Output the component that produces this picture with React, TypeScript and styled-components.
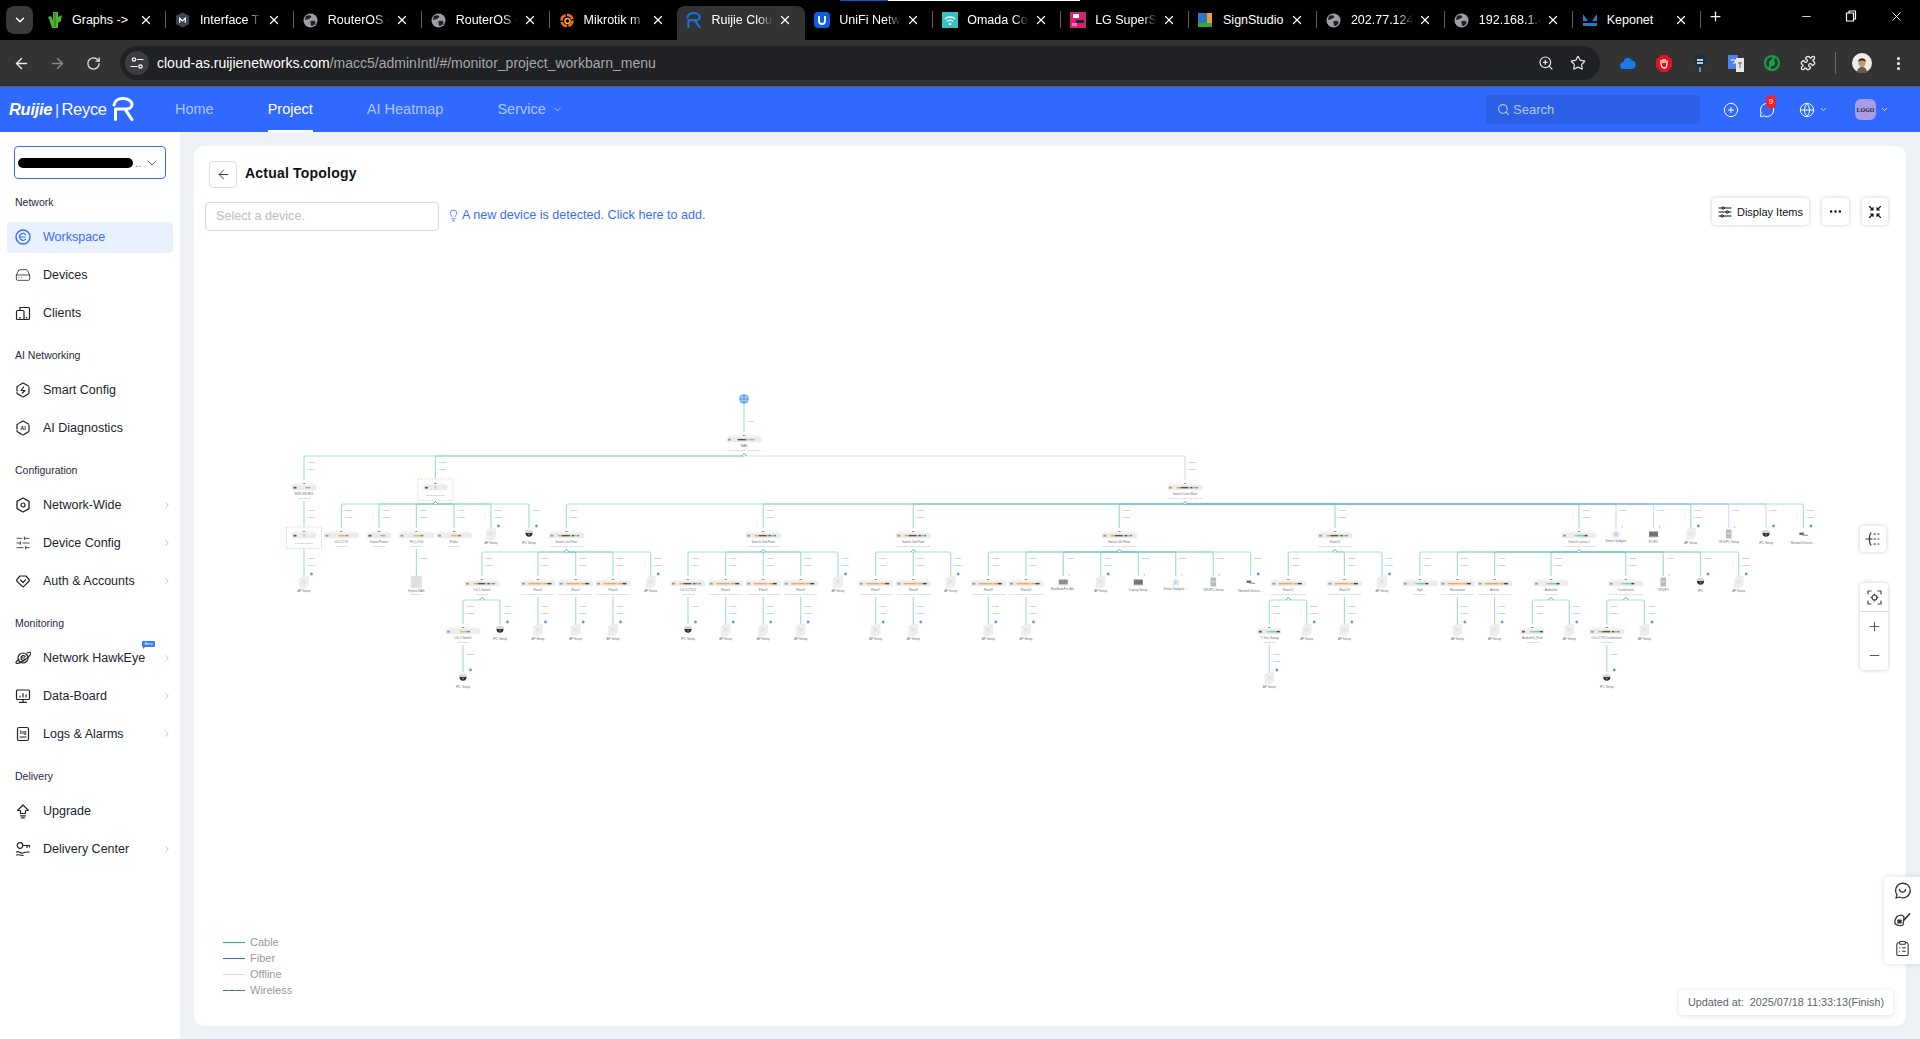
import React from 'react';
import styled, { createGlobalStyle } from 'styled-components';
import {
  ArrowLeft, ArrowRight, RotateCw, Star, Search, ZoomIn, Plus, Minus, ChevronDown, ChevronRight, X,
  Lightbulb, MessageCircle, Globe, CirclePlus, SlidersHorizontal, Ellipsis, EllipsisVertical, ClipboardList,
  Puzzle, HardDrive,
} from 'lucide-react';

const GlobalStyle = createGlobalStyle`
  html, body { margin: 0; padding: 0; height: 1039px; overflow: hidden; background: #eef1f5; }
  body { font-family: "Liberation Sans", Arial, sans-serif; }
  * { box-sizing: border-box; }
`;

const Page = styled.div`
  width: 1920px; height: 1039px; display: flex; flex-direction: column; position: relative; overflow: hidden;
`;

/* ---------- browser chrome ---------- */
const TabStrip = styled.div`
  height: 40px; background: #000; display: flex; align-items: flex-start; padding-left: 6px; position: relative;
`;
const TabListButton = styled.div`
  width: 27px; height: 28px; margin-top: 6px; margin-right: 5px; border-radius: 8px; background: #3a3a3a; color: #fff;
  display: flex; align-items: center; justify-content: center;
`;
const LoadBar = styled.div<{ $left: number; $width: number; $color: string }>`
  position: absolute; top: 0; height: 1px; left: ${p => p.$left}px; width: ${p => p.$width}px; background: ${p => p.$color};
`;
const Tab = styled.div<{ $active?: boolean; $sep?: boolean }>`
  width: 127.9px; height: 34px; margin-top: 6px; display: flex; align-items: center; padding: 0 0 6px 9px; position: relative;
  color: #fff; font-size: 12.5px; flex: none;
  background: ${p => (p.$active ? '#333' : 'transparent')};
  border-radius: 8px 8px 0 0;
  &::after {
    content: ''; position: absolute; right: 0; top: 5px; width: 1px; height: 17px;
    background: ${p => (p.$sep ? '#5f5f5f' : 'transparent')};
  }
`;
const FavBox = styled.div`
  width: 16px; height: 18px; flex: none; display: flex; align-items: center;
`;
const TabTitle = styled.div<{ $fade: boolean }>`
  width: 62px; margin-left: 9px; white-space: nowrap;
  ${p => (p.$fade ? 'mask-image: linear-gradient(90deg,#000 76%,transparent 100%);' : '')}
`;
const TabClose = styled.div`
  position: absolute; left: 101px; top: 7px; width: 14px; height: 14px; color: #fff; display: flex;
`;
const NewTab = styled.div`
  margin-top: 9px; margin-left: 7px; color: #fff; display: flex;
`;
const WindowControls = styled.div`
  margin-left: auto; display: flex; align-items: center; height: 32px; color: #fff; padding-right: 16px; gap: 32px;
`;
const Toolbar = styled.div`
  height: 47px; background: #333; border-bottom: 1px solid #5c5c5c; display: flex; align-items: center; padding-left: 3px; color: #fff;
`;
const NavButton = styled.div<{ $dim?: boolean }>`
  width: 36px; height: 32px; display: flex; align-items: center; justify-content: center;
  color: ${p => (p.$dim ? '#8a8a8a' : '#e8e8e8')};
`;
const Omnibox = styled.div`
  width: 1480px; height: 34px; margin-left: 9px; border-radius: 17px; background: #202124; display: flex; align-items: center; padding: 0 14px 0 5px;
`;
const SiteButton = styled.div`
  width: 24px; height: 24px; border-radius: 50%; background: #3c3d40; display: flex; align-items: center; justify-content: center; color: #fff;
`;
const Url = styled.div`
  margin-left: 8px; font-size: 14px; color: #a8a8a8; white-space: nowrap;
  b { font-weight: 400; color: #fff; }
`;
const OmniIcons = styled.div`
  margin-left: auto; display: flex; gap: 16px; color: #e3e3e3;
`;
const ExtRow = styled.div`
  display: flex; align-items: center; margin-left: 10px;
`;
const Ext = styled.div`
  width: 36px; height: 32px; display: flex; align-items: center; justify-content: center;
`;
const ToolbarSep = styled.div`
  width: 1px; height: 22px; background: #6a6a6a; margin: 0 8px 0 9px;
`;

/* ---------- app header ---------- */
const AppHeader = styled.header`
  height: 45px; background: #2f69ff; display: flex; align-items: center; padding-left: 9px; color: #fff; flex: none;
`;
const Logo = styled.div`
  width: 125px; display: flex; align-items: center; justify-content: space-between; color: #fff; white-space: nowrap;
`;
const LogoWord = styled.span`
  font-size: 16.5px; letter-spacing: -0.3px;
  b { font-style: italic; font-weight: 700; }
  i { font-style: normal; margin: 0 3px 0 3px; font-weight: 300; font-size: 14px; }
`;
const TopNav = styled.nav`
  margin-left: 41px; display: flex; gap: 54px; height: 100%;
`;
const TopNavItem = styled.div<{ $active?: boolean }>`
  height: 100%; display: flex; align-items: center; gap: 6px; font-size: 14.5px; padding-top: 1px;
  color: ${p => (p.$active ? '#fff' : 'rgba(255,255,255,.62)')};
  border-bottom: 2px solid ${p => (p.$active ? '#fff' : 'transparent')};
`;
const HeaderRight = styled.div`
  margin-left: auto; display: flex; align-items: center; padding-right: 31px;
`;
const HeaderSearch = styled.div`
  width: 214px; height: 29px; background: #2a5fe6; border-radius: 4px; display: flex; align-items: center; padding-left: 11px; gap: 3px;
  color: rgba(255,255,255,.65); font-size: 13px;
`;
const HeaderIcon = styled.div<{ $ml: number }>`
  margin-left: ${p => p.$ml}px; position: relative; display: flex; align-items: center; color: #fff; gap: 4px;
`;
const Badge = styled.span`
  position: absolute; top: -7px; left: 7px; width: 10px; height: 14px; border-radius: 6px; background: #f5222d;
  color: #fff; font-size: 8px; line-height: 14px; text-align: center;
`;
const TenantLogo = styled.div`
  width: 21px; height: 21px; border-radius: 6px; background: #a99be6; color: #1c1c1c; font-size: 6px; font-family: "Liberation Serif", serif;
  font-weight: 700; display: flex; align-items: center; justify-content: center;
`;

/* ---------- layout ---------- */
const Body = styled.div`
  flex: 1; display: flex; min-height: 0;
`;
const Sidebar = styled.aside`
  width: 180px; background: #fff; flex: none; padding-top: 14px;
`;
const ProjectSelect = styled.div`
  margin: 0 14px 13px; height: 33px; border: 1px solid #3a6dff; border-radius: 4px; display: flex; align-items: center; padding-left: 3px; color: #555; font-size: 12px;
`;
const Redaction = styled.div`
  width: 115px; height: 10px; border-radius: 5px; background: #000; flex: none;
`;
const Dots = styled.span`
  margin-left: 2px; color: #888; flex: 1;
`;
const SelectChevron = styled.div`
  display: flex; margin-right: 5px; color: #444;
`;
const GroupLabel = styled.div`
  height: 20px; line-height: 20px; margin: 0 0 9.5px 15px; font-size: 10.5px; color: #1f2a3d;
`;
const Group = styled.div`
  margin-bottom: 16.5px;
`;
const NavRow = styled.div<{ $active?: boolean }>`
  height: 31px; margin: 0 7px 7px; border-radius: 4px; display: flex; align-items: center; padding-left: 8px; position: relative;
  font-size: 12.5px; color: ${p => (p.$active ? '#3a6dff' : '#20242c')};
  background: ${p => (p.$active ? '#e9f0ff' : 'transparent')};
`;
const NavIconBox = styled.div`
  width: 16px; height: 16px; display: flex; margin-right: 12px; flex: none;
`;
const NavChevron = styled.div`
  position: absolute; right: 1px; top: 10px; color: #b5b5b5; display: flex;
`;
const BetaTag = styled.span`
  position: absolute; left: 135px; top: -2px; width: 13px; height: 6px; border-radius: 1px; background: #3a7bff; color: #fff;
  font-size: 4px; line-height: 6px; text-align: center;
  &::after { content: ''; position: absolute; left: 1px; top: 6px; border: 1px solid transparent; border-top-color: #3a7bff; border-left-color: #3a7bff; }
`;
const Main = styled.main`
  flex: 1; padding: 14px 14px 13px; min-width: 0; display: flex;
`;
const Card = styled.section`
  flex: 1; background: #fff; border-radius: 10px; position: relative; padding: 15px 18px 0 15px; overflow: hidden;
`;
const TitleRow = styled.div`
  display: flex; align-items: center; gap: 8px; position: relative; z-index: 1;
`;
const BackButton = styled.div`
  width: 28px; height: 27px; border: 1px solid #dcdfe6; border-radius: 4px; display: flex; align-items: center; justify-content: center; color: #333;
`;
const Title = styled.h1`
  margin: -3px 0 0; font-size: 14px; font-weight: 700; color: #111; letter-spacing: 0.2px;
`;
const SearchRow = styled.div`
  margin: 14px 0 0 -4px; display: flex; align-items: flex-start; position: relative; z-index: 1;
`;
const DeviceInput = styled.div`
  width: 234px; height: 29px; border: 1px solid #d5d9e2; border-radius: 4px; padding-left: 10px; font-size: 12.6px; line-height: 27px; color: #bdbdbd;
`;
const Hint = styled.div`
  margin: 6px 0 0 8px; display: flex; align-items: center; gap: 2px; font-size: 12.6px; color: #3a6dff;
`;
const Tools = styled.div`
  margin: -4px 0 0 auto; display: flex; gap: 13px;
`;
const ToolButton = styled.div<{ $w?: number }>`
  height: 27px; ${p => (p.$w ? `width: ${p.$w}px;` : 'padding: 0 6px;')} background: #fff; border-radius: 4px; display: flex; align-items: center; justify-content: center; gap: 5px;
  font-size: 11px; color: #111; box-shadow: 0 0 4px rgba(0,0,0,.22);
`;
const TopoSvg = styled.svg`
  position: absolute; left: 0; top: 0; width: 1712px; height: 880px;
`;
const CollapseButton = styled.div`
  position: absolute; right: 20px; top: 380px; width: 26px; height: 26px; background: #fff; border-radius: 4px; box-shadow: 0 0 4px rgba(0,0,0,.22);
  display: flex; align-items: center; justify-content: center; color: #333;
`;
const ZoomGroup = styled.div`
  position: absolute; right: 18px; top: 437px; width: 28px; height: 87px; background: #fff; border-radius: 4px; box-shadow: 0 0 4px rgba(0,0,0,.22);
  display: flex; flex-direction: column; color: #444;
`;
const ZoomCell = styled.div<{ $line?: boolean; $h: number }>`
  height: ${p => p.$h}px; display: flex; align-items: center; justify-content: center;
  ${p => (p.$line ? 'border-bottom: 1px solid #dcdfe6;' : '')}
`;
const Legend = styled.div`
  position: absolute; left: 29px; bottom: 28px; display: flex; flex-direction: column;
`;
const LegendRow = styled.div`
  height: 16px; display: flex; align-items: center; gap: 5px; font-size: 11px; color: #9a9a9a;
`;
const LegendLine = styled.span<{ $color: string; $dash?: boolean }>`
  width: 22px; height: 1px; background: ${p => p.$color};
  ${p => (p.$dash ? 'background: repeating-linear-gradient(90deg,#555 0 4px,#1db58c 4px 7px);' : '')}
`;
const Stamp = styled.div`
  position: absolute; right: 13px; bottom: 11px; height: 25px; padding: 0 9px; background: #fff; border-radius: 4px; box-shadow: 0 1px 6px rgba(0,0,0,.12);
  font-size: 10.8px; color: #5b6270; line-height: 25px; white-space: pre;
`;
const FloatPanel = styled.div`
  position: absolute; right: 0; top: 877px; width: 36px; height: 87px; background: #fff; border-radius: 4px 0 0 4px; box-shadow: 0 0 6px rgba(0,0,0,.14);
  display: flex; flex-direction: column; align-items: center; gap: 12px; padding: 4.5px 0 0; color: #333;
`;

/* ---------- small drawings ---------- */
const Stroke = styled.svg`
  fill: none; stroke: currentColor; stroke-width: 1.2; stroke-linecap: round; stroke-linejoin: round; display: block;
`;
const S: React.FC<{ children: React.ReactNode; size?: number; vb?: string }> = ({ children, size = 16, vb = '0 0 16 16' }) => (
  <Stroke width={size} height={size} viewBox={vb}>{children}</Stroke>
);
const RuijieMark = ({ color = '#fff', size = 22, sw = 3 }: { color?: string; size?: number; sw?: number }) => (
  <svg width={size} height={size * 1.1} viewBox="0 0 22 24" fill="none" stroke={color} strokeWidth={sw} strokeLinecap="round" strokeLinejoin="round">
    <path d="M2 8C3 3 7 1.5 11 1.5 16 1.5 20 4 20 7.5 20 10.5 17 12 14 12H3.5V22.5M13 12 20 22.5" />
  </svg>
);
const WebFav = () => (
  <svg width="15" height="15" viewBox="0 0 15 15">
    <circle cx="7.5" cy="7.5" r="7" fill="#9aa0a6" />
    <path d="M3 3c2-1 4-1 5 0s-1 2.5-2.5 3S3 7.5 2 6.5zM8 8c2-.5 4 0 4.5 1s-1 3.5-3 4-1.5-2-2-3 0-1.8.5-2z" fill="#222" />
  </svg>
);

const favicons: Record<string, React.ReactNode> = {
  cacti: <svg width="16" height="18" viewBox="0 0 16 18"><path d="M6 1h5v16H5C3 12 3 9 1 6l3-1 2 4zM11 6l4-2-1 6-3 2z" fill="#4fb32f" /><path d="M8 2v14" stroke="#1f7a1c" strokeWidth="1" /></svg>,
  mikrotik: <svg width="15" height="16" viewBox="0 0 16 16"><path d="M8 0l7 3.5v9L8 16l-7-3.5v-9z" fill="#3b4550" /><path d="M5 11V6l3 3 3-3v5" stroke="#fff" strokeWidth="1.3" fill="none" /></svg>,
  grafana: <svg width="16" height="16" viewBox="0 0 16 16"><circle cx="8" cy="8.5" r="5.5" fill="none" stroke="#f26b21" strokeWidth="2.6" strokeDasharray="7 1.4" /><circle cx="8.5" cy="9" r="2.5" fill="none" stroke="#fbb72f" strokeWidth="1.4" /></svg>,
  ruijie: <RuijieMark color="#1a73e8" size={15} />,
  unifi: <svg width="16" height="16" viewBox="0 0 16 16"><rect width="16" height="16" rx="4" fill="#0f5fdc" /><path d="M5 4v5a3 3 0 006 0V4" fill="none" stroke="#fff" strokeWidth="1.8" /></svg>,
  omada: <svg width="16" height="16" viewBox="0 0 16 16"><rect width="16" height="16" fill="#36c2c2" /><path d="M3 7a7 7 0 0110 0M5 9.5a4 4 0 016 0" stroke="#fff" strokeWidth="1.3" fill="none" /><circle cx="8" cy="12" r="1.3" fill="#fff" /></svg>,
  lg: <svg width="16" height="16" viewBox="0 0 16 16"><rect width="16" height="16" fill="#d4246f" /><rect x="3" y="2" width="6" height="4" fill="#fff" /><rect x="6" y="8" width="8" height="3" fill="#222" /><rect x="2" y="11" width="5" height="3" fill="#f6c" /></svg>,
  sign: <svg width="14" height="14" viewBox="0 0 14 14"><rect width="9" height="10" fill="#2b78c5" /><rect x="9" width="5" height="10" fill="#f0a030" /><rect y="10" width="14" height="4" fill="#38a838" /></svg>,
  keponet: <svg width="16" height="14" viewBox="0 0 16 14"><path d="M1 1l5 7H1zM15 1l-5 7h5z" fill="#1a7fd0" /><rect x="1" y="10" width="14" height="3" fill="#1a7fd0" /></svg>,
  web: <WebFav />,
};

const tabs: { f: string; t: string; fade?: boolean; active?: boolean; sep?: boolean }[] = [
  { f: 'cacti', t: 'Graphs ->', sep: true },
  { f: 'mikrotik', t: 'Interface T', fade: true, sep: true },
  { f: 'web', t: 'RouterOS -', fade: true, sep: true },
  { f: 'web', t: 'RouterOS -', fade: true, sep: true },
  { f: 'grafana', t: 'Mikrotik m', fade: true },
  { f: 'ruijie', t: 'Ruijie Clou', fade: true, active: true },
  { f: 'unifi', t: 'UniFi Netw', fade: true, sep: true },
  { f: 'omada', t: 'Omada Co', fade: true, sep: true },
  { f: 'lg', t: 'LG SuperSi', fade: true, sep: true },
  { f: 'sign', t: 'SignStudio', sep: true },
  { f: 'web', t: '202.77.124', fade: true, sep: true },
  { f: 'web', t: '192.168.1.4', fade: true, sep: true },
  { f: 'keponet', t: 'Keponet', sep: true },
];

const navIcons: Record<string, React.ReactNode> = {
  workspace: <S><circle cx="8" cy="8" r="7" strokeWidth="1.4" /><path d="M10.5 5.6A3.3 3.3 0 105.4 9.9 3.3 3.3 0 0010.5 10.4M5.2 8h5" /></S>,
  devices: <HardDrive size={16} strokeWidth={1.2} />,
  clients: <S><path d="M5 2.5h8.5a1 1 0 011 1v10a1 1 0 01-1 1H9" /><path d="M5 2.5v3" /><rect x="1.5" y="5.5" width="7.5" height="9" rx="1" /><path d="M4.5 12.8h1M11 12.8h1" /></S>,
  smart: <S><path d="M8 1l6 3.4v7.2L8 15l-6-3.4V4.4z" strokeDasharray="6.2 1.4" /><path d="M8.6 5L6 8.5h4L7.4 11" /></S>,
  ai: <S><path d="M8 1l6 3.4v7.2L8 15l-6-3.4V4.4z" strokeDasharray="6.2 1.4" /><text x="8" y="10" textAnchor="middle" fontSize="5.6" fontFamily="Liberation Sans" fill="currentColor" stroke="none" fontWeight="700">AI</text></S>,
  wide: <S><path d="M8 1l6 3.4v7.2L8 15l-6-3.4V4.4z" strokeWidth="1.3" /><circle cx="8" cy="8" r="2" /></S>,
  config: <SlidersHorizontal size={16} strokeWidth={1.2} />,
  auth: <S><path d="M2 6.5L5 3h6l3 3.5c.6.7.6 1.1 0 1.8L8.8 13.4c-.5.5-1.1.5-1.6 0L2 8.3c-.6-.7-.6-1.1 0-1.8z" /><path d="M5.5 7L8 9.5 10.5 7" /></S>,
  hawk: <S><circle cx="8" cy="8" r="5" /><path d="M4 9.5C1.5 11 .5 12.3 1 13c.8 1 5-.3 9-3.3s6.3-6 5.8-7c-.4-.6-1.8-.5-3.8.3" /><path d="M10 6.5a2.3 2.3 0 10-.2 3.2M6 8h3.5" /></S>,
  board: <S><rect x="1.5" y="2" width="13" height="9.5" rx="1" /><path d="M8 11.5V14M4.5 14.3h7M5 9V8M8 9V5.5M11 9V6.8" /></S>,
  logs: <S><rect x="2.5" y="1.5" width="11" height="13" rx="1.5" /><text x="8" y="7.5" textAnchor="middle" fontSize="4.5" fontFamily="Liberation Sans" fill="currentColor" stroke="none" fontWeight="700">log</text><path d="M5 11h6" /></S>,
  upgrade: <S><path d="M8 2L2.5 7.5h3v3h5v-3h3z" /><path d="M5.5 12.8h5M6.5 14.8h3" /></S>,
  delivery: <S><circle cx="5" cy="4.5" r="2.8" /><path d="M7.8 4.5H14.5M12 4.5v2M14.5 4.5v1.5" /><path d="M1.5 11c2-1.5 3.5 1.5 6 1s4-1.5 6.5-.8M1.5 14c2.5-1 4 .7 6.5.3" /></S>,
};

const nav = [
  { label: 'Network', items: [
    { i: 'workspace', t: 'Workspace', active: true }, { i: 'devices', t: 'Devices' }, { i: 'clients', t: 'Clients' },
  ] },
  { label: 'AI Networking', items: [{ i: 'smart', t: 'Smart Config' }, { i: 'ai', t: 'AI Diagnostics' }] },
  { label: 'Configuration', items: [
    { i: 'wide', t: 'Network-Wide', more: true }, { i: 'config', t: 'Device Config', more: true }, { i: 'auth', t: 'Auth & Accounts', more: true },
  ] },
  { label: 'Monitoring', items: [
    { i: 'hawk', t: 'Network HawkEye', more: true, beta: true }, { i: 'board', t: 'Data-Board', more: true }, { i: 'logs', t: 'Logs & Alarms', more: true },
  ] },
  { label: 'Delivery', items: [{ i: 'upgrade', t: 'Upgrade' }, { i: 'delivery', t: 'Delivery Center', more: true }] },
] as { label: string; items: { i: string; t: string; active?: boolean; more?: boolean; beta?: boolean }[] }[];

/* ---------- topology data ---------- */
type Kind = 'sw' | 'ss' | 'unk' | 'ap' | 'cam' | 'tower' | 'laptop' | 'mac' | 'home' | 'net' | 'box';
interface TNode { x: number; k: Kind; n: string; s?: string; st?: string; c?: TNode[]; blue?: boolean; one?: boolean; }

const IP = '192.168.1.2';
const MAC = 'c4:70:ab:2e:91:d0 / 192.168.1.11';
const ap = (x: number, blue?: boolean): TNode => ({ x, k: 'ap', n: 'AP Setup', blue });
const cam = (x: number, blue?: boolean, one?: boolean): TNode => ({ x, k: 'cam', n: 'IPC Setup', blue, one });
const dev = (x: number, k: Kind, n: string, blue?: boolean, one = true): TNode => ({ x, k, n, blue, one });
const sw = (x: number, n: string, st: string, s: string, c?: TNode[], blue?: boolean): TNode => ({ x, k: 'sw', n, st, s, c, blue });
const ss = (x: number, n: string, st: string, s: string, c?: TNode[]): TNode => ({ x, k: 'ss', n, st, s, c });
const floor = (x: number, n: string, child: TNode): TNode => sw(x, n, 'o', MAC, [child]);

const tree: TNode = sw(744, 'WAN', 'r', MAC, [
  ss(304, 'NVR-SW-B01', 'k', IP, [
    { x: 304, k: 'unk', n: 'Unknown device', c: [ap(304)] },
  ]),
  {
    x: 435.4, k: 'unk', n: 'Unknown device', c: [
      sw(341.4, 'LG-CCTV', 'c', IP),
      ss(379, 'Guest-Printer', 'k', IP),
      sw(416.4, 'FS_Lt700', 'c', IP, [dev(416.4, 'box', 'Fujitsu-NAS')]),
      sw(454, 'Public', 'c', IP),
      ap(491),
      { ...cam(529), one: true },
    ],
  },
  sw(1185, 'Switch-Core-Main', 'm', MAC, [
    sw(566.4, 'Switch-1st-Floor', 'm', MAC, [
      sw(482, 'LG-1-Switch', 'm', IP, [
        sw(463, 'LG-2-Switch', 'c', IP, [{ ...cam(463), one: true }]),
        cam(500),
      ]),
      floor(538, 'Floor1', ap(538)), floor(575.7, 'Floor2', ap(575.7)), floor(613, 'Floor3', ap(613)), ap(650.7),
    ]),
    sw(763.2, 'Switch-2nd-Floor', 'm', MAC, [
      sw(688, 'LG-CCTV-2', 'm', IP, [{ ...cam(688), one: true }]),
      floor(725.7, 'Floor4', ap(725.7)), floor(763.2, 'Floor5', ap(763.2)), floor(800.7, 'Floor6', ap(800.7)), ap(838),
    ]),
    sw(913.3, 'Switch-3rd-Floor', 'm', MAC, [
      floor(875.7, 'Floor7', ap(875.7)), floor(913.3, 'Floor8', ap(913.3)), ap(950.7),
    ]),
    sw(1119.3, 'Switch-4th-Floor', 'm', MAC, [
      floor(988.3, 'Floor9', ap(988.3)), floor(1026, 'Floor10', ap(1026)),
      dev(1063.3, 'mac', 'MacBookPro-Ad...'), ap(1100.7),
      dev(1138.3, 'laptop', 'Laptop Setup'), dev(1175.7, 'home', 'Smart Gadgets ...'),
      dev(1213.3, 'tower', 'CPU/PC Setup'), dev(1250.7, 'net', 'Network Device ...'),
    ]),
    sw(1335, 'Floor11', 'm', MAC, [
      sw(1288.3, 'Floor12', 'o', MAC, [
        ss(1269.3, 'T-Tera-Swing', 'g', IP, [ap(1269.3)]),
        ap(1306.7),
      ]),
      floor(1344.4, 'Floor13', ap(1344.4)),
      ap(1382),
    ]),
    sw(1579, 'Switch-Lantai-2', 'g', MAC, [
      sw(1419.8, 'Gym', 'g', IP),
      floor(1457.4, 'Mezzanine', ap(1457.4)), floor(1494.6, 'Atrium', ap(1494.6)),
      sw(1551, 'Ambulink', 'g', IP, [
        ss(1532.4, 'Ambulink_Pool', 'g', IP),
        ap(1569.3),
      ]),
      sw(1625.8, 'Conference', 'g', MAC, [
        sw(1606.8, 'LG-CCTV-Conference', 'm', IP, [{ ...cam(1606.8), one: true }]),
        ap(1644.4),
      ]),
      dev(1663.3, 'tower', 'CPU/PC'), dev(1700.5, 'cam', 'IPC'), ap(1738.7),
    ]),
    dev(1616, 'home', 'Smart Gadgets', true),
    dev(1653.6, 'laptop', 'PC/PC', true),
    ap(1690.8),
    dev(1728.7, 'tower', 'CPU/PC Setup', true),
    { ...cam(1766, true), one: true },
    dev(1803.4, 'net', 'Network Device ...', false, false),
  ], true),
]);

const GREEN = '#1db58c';
const BLUE = '#8fb0ff';

const LabelText = styled.text<{ $c?: string; $s?: number }>`
  font-family: "Liberation Sans", Arial, sans-serif; font-size: ${p => p.$s ?? 3.1}px; fill: ${p => p.$c ?? '#6f6f6f'};
`;

const stripes: Record<string, [string, number][]> = {
  o: [['#f3a94f', 13], ['#f5c58a', 2], ['#f3a94f', 4], ['#444', 4]],
  m: [['#f3a94f', 4], ['#555', 8], ['#f0b36a', 2], ['#444', 2], ['#6fd0ad', 4], ['#444', 1]],
  c: [['#f0b36a', 7], ['#888', 3]],
  g: [['#bbb', 3], ['#6fd0ad', 7], ['#444', 3]],
  k: [['#aaa', 5]],
  r: [['#555', 9], ['#ccc', 3], ['#6fd0ad', 5]],
};

function Bar({ x, B, w, st }: { x: number; B: number; w: number; st?: string }) {
  const top = B + 29;
  const segs = stripes[st ?? 'c'] ?? [];
  const total = segs.reduce((a, s) => a + s[1], 0);
  let sx = x - (w >= 30 ? total / 2 - 2 : total / 2 - 4);
  return (
    <g>
      <path d={`M${x - w / 2 + 1.5} ${top}L${x - w / 2 + 3} ${top - 2.2}H${x + w / 2 - 3}L${x + w / 2 - 1.5} ${top}z`} fill="#f6f6f6" />
      <rect x={x - w / 2} y={top} width={w} height={5.2} fill="#ececec" />
      <rect x={x - w / 2 + 1.5} y={top + 1.8} width={3} height={1.8} fill={w >= 30 ? '#999' : '#555'} />
      <rect x={x - 1.2} y={top - 2} width={2.4} height={0.8} fill="#777" />
      {segs.map(([c, n], i) => {
        const el = <rect key={i} x={sx} y={top + 1.9} width={n} height={1.5} fill={c} />;
        sx += n;
        return el;
      })}
    </g>
  );
}

function NodeGlyph({ n, B }: { n: TNode; B: number }) {
  const { x, k } = n;
  const lbl = (y: number) => <LabelText x={x} y={y} textAnchor="middle">{n.n}</LabelText>;
  const cy = B + 30;
  const tip = (c: string) => <circle cx={x + 7.5} cy={B + 22} r={1.4} fill={c} />;
  switch (k) {
    case 'sw':
    case 'ss':
      return (
        <g>
          <Bar x={x} B={B} w={k === 'sw' ? 35 : 24} st={n.st} />
          {lbl(B + 39)}
          <LabelText x={x} y={B + 42.5} textAnchor="middle" $s={2.3} $c="#a5a5a5">{n.s}</LabelText>
        </g>
      );
    case 'unk':
      return (
        <g>
          <rect x={x - 17.5} y={B + 23} width={35} height={21.5} fill="#fff" stroke="#f2b98c" strokeWidth={0.7} strokeDasharray="1 1" />
          <Bar x={x} B={B} w={24} st="none" />
          <path d={`M${x} ${B + 33.5}v-3M${x - 1} ${B + 31.3}l1-1 1 1`} stroke="#999" strokeWidth={0.5} fill="none" />
          <LabelText x={x} y={B + 39.5} textAnchor="middle" $s={2.5} $c="#9a9a9a">{n.n}</LabelText>
        </g>
      );
    case 'ap':
      return (
        <g>
          <path d={`M${x - 4.5} ${cy - 3.5}L${x - 1.5} ${cy - 5.5}H${x + 4.5}V${cy + 3}L${x + 1.5} ${cy + 5.5}H${x - 4.5}z`} fill="#eeeeee" stroke="#e3e3e3" strokeWidth={0.4} />
          <path d={`M${x - 2} ${cy - 2}l3.5 3.5M${x + 1.5} ${cy - 2}l-3.5 3.5`} stroke="#bcbcbc" strokeWidth={0.4} />
          {tip('#5b94ff')}
          {lbl(B + 39.5)}
        </g>
      );
    case 'cam':
      return (
        <g>
          <path d={`M${x - 4} ${cy - 2}a4 2 0 018 0v1h-8z`} fill="#d5d5d5" />
          <path d={`M${x - 3.5} ${cy - 1}h7a3.5 3.8 0 01-7 0z`} fill="#2b2b30" />
          <circle cx={x} cy={cy + 0.5} r={0.9} fill="#888" />
          {tip('#5b94ff')}
          {lbl(B + 39.5)}
        </g>
      );
    case 'tower':
      return (<g><rect x={x - 2.8} y={cy - 4.5} width={5.6} height={9} fill="#b7bcc2" /><rect x={x - 2} y={cy - 1} width={4} height={0.8} fill="#eee" /><circle cx={x + 6} cy={B + 23} r={0.8} fill="#9ab8ff" />{lbl(B + 38.5)}</g>);
    case 'laptop':
      return (<g><rect x={x - 4.5} y={cy - 2.5} width={9} height={5.5} fill="#70757c" /><rect x={x - 5} y={cy + 2.5} width={10} height={0.9} fill="#bbb" /><circle cx={x + 6} cy={B + 23} r={0.8} fill="#9ab8ff" />{lbl(B + 38.5)}</g>);
    case 'mac':
      return (<g><rect x={x - 4.5} y={cy - 2.5} width={9} height={5} fill="#8b9096" /><rect x={x - 5} y={cy + 2.5} width={10} height={0.8} fill="#ccc" /><circle cx={x + 6} cy={B + 23} r={0.8} fill="#ccc" />{lbl(B + 38)}</g>);
    case 'home':
      return (<g><path d={`M${x} ${cy - 4}L${x + 4.5} ${cy}H${x + 3}V${cy + 3.5}H${x - 3}V${cy}H${x - 4.5}z`} fill="#dbe6f7" /><circle cx={x} cy={cy + 0.5} r={0.9} fill="#8fb0ff" /><circle cx={x + 6} cy={B + 23} r={0.8} fill="#ccc" />{lbl(B + 38)}</g>);
    case 'net':
      return (<g><rect x={x - 4} y={cy - 1.5} width={4.5} height={2.5} fill="#666" /><rect x={x - 1} y={cy + 0.5} width={5.5} height={1.5} fill="#aaa" />{tip('#5b94ff')}{lbl(B + 39.5)}</g>);
    case 'box':
      return (<g><rect x={x - 5.5} y={B + 24} width={11} height={12} fill="#dfdfdf" stroke="#ededed" strokeWidth={0.5} />{lbl(B + 40)}<LabelText x={x} y={B + 43} textAnchor="middle" $s={2.3} $c="#a5a5a5">192.168.1.9</LabelText></g>);
    default:
      return null;
  }
}

const edgeWords = ['↑ 0Kbps', '↓ 1Gbps'];

function Topology({ node, B }: { node: TNode; B: number }) {
  const bus = B + 48;
  const kids = node.c ?? [];
  const single = kids.length === 1 && kids[0].x === node.x;
  return (
    <g>
      {kids.map((c, i) => {
        const color = c.blue ? BLUE : GREEN;
        const r = 2;
        let d: string;
        if (single) d = `M${c.x} ${bus - 3}V${bus + 24}`;
        else if (c.x === node.x) d = `M${c.x} ${bus}V${bus + 24}`;
        else {
          const dir = c.x > node.x ? 1 : -1;
          d = `M${node.x} ${bus}H${c.x - dir * r}Q${c.x} ${bus} ${c.x} ${bus + r}V${bus + 24}`;
        }
        return (
          <g key={i}>
            <path d={d} fill="none" stroke={color} strokeOpacity={c.blue ? 0.42 : 0.4} strokeWidth={1.2} />
            <LabelText x={c.x + 1.8} y={bus + 7} $s={2.4} $c="#8d8d8d">{edgeWords[0]}</LabelText>
            {!c.one && <LabelText x={c.x + 1.8} y={bus + 14} $s={2.4} $c="#8d8d8d">{edgeWords[1]}</LabelText>}
          </g>
        );
      })}
      {kids.length > 0 && !single && (
        <path d={`M${node.x - 2.5} ${bus}L${node.x} ${bus - 2.5}L${node.x + 2.5} ${bus}`} fill="#fff" stroke="#1db58c" strokeWidth={0.9} />
      )}
      <NodeGlyph n={node} B={B} />
      {kids.map((c, i) => <Topology key={i} node={c} B={bus} />)}
    </g>
  );
}

function TopologyCanvas() {
  return (
    <TopoSvg viewBox="194 146 1712 880">
      <path d="M744 404V432" stroke={GREEN} strokeOpacity={0.4} strokeWidth={1.2} />
      <LabelText x={746} y={421.5} $s={2.4} $c="#8d8d8d">↑ Port1</LabelText>
      <circle cx={744} cy={399} r={4.8} fill="#5aa3f5" />
      <path d="M739.5 397.5h9M739.5 400.5h9M742 394.5v9M746 394.5v9" stroke="#cfe4ff" strokeWidth={0.6} />
      <Topology node={tree} B={408} />
    </TopoSvg>
  );
}

export default function App() {
  return (
    <Page>
      <GlobalStyle />
      <TabStrip>
        <TabListButton><ChevronDown size={14} strokeWidth={2.6} /></TabListButton>
        {tabs.map((t, i) => (
          <Tab key={i} $active={t.active} $sep={t.sep}>
            <FavBox>{favicons[t.f]}</FavBox>
            <TabTitle $fade={!!t.fade}>{t.t}</TabTitle>
            <TabClose><X size={14} strokeWidth={2.2} /></TabClose>
          </Tab>
        ))}
        <NewTab><Plus size={15} strokeWidth={2} /></NewTab>
        <WindowControls>
          <Minus size={13} strokeWidth={1.5} />
          <S size={12} vb="0 0 12 12"><rect x="1.5" y="3" width="7" height="8" /><path d="M4 3V1h6.5v8H8.5" /></S>
          <X size={15} strokeWidth={1.5} />
        </WindowControls>
        <LoadBar $left={840} $width={48} $color="#0b57d0" />
        <LoadBar $left={888} $width={192} $color="#fff" />
      </TabStrip>

      <Toolbar>
        <NavButton><ArrowLeft size={17} strokeWidth={2} /></NavButton>
        <NavButton $dim><ArrowRight size={17} strokeWidth={2} /></NavButton>
        <NavButton><RotateCw size={15} strokeWidth={2} /></NavButton>
        <Omnibox>
          <SiteButton>
            <S size={14} vb="0 0 14 14"><circle cx="4" cy="3.5" r="1.7" /><path d="M7.5 3.5H13M1 10.5h6" /><circle cx="10.5" cy="10.5" r="1.7" /></S>
          </SiteButton>
          <Url><b>cloud-as.ruijienetworks.com</b>/macc5/adminIntl/#/monitor_project_workbarn_menu</Url>
          <OmniIcons>
            <ZoomIn size={16} strokeWidth={1.8} />
            <Star size={16} strokeWidth={1.8} />
          </OmniIcons>
        </Omnibox>
        <ExtRow>
          <Ext><svg width="16" height="12" viewBox="0 0 16 12"><path d="M4 12a3.5 3.5 0 01-.6-7A4.5 4.5 0 0112 3.5 4.3 4.3 0 0112 12z" fill="#1a7be8" /></svg></Ext>
          <Ext><svg width="16" height="17" viewBox="0 0 16 17"><path d="M5 0h6l5 5v7l-5 5H5l-5-5V5z" fill="#e5111f" /><path d="M5 9V5M7 8V4M9 8V4M11 9V5.5M5 8c0 3 1.5 5 3.5 5S11 11 11 8" stroke="#fff" strokeWidth="1.3" fill="none" /></svg></Ext>
          <Ext><svg width="14" height="18" viewBox="0 0 14 18"><circle cx="7" cy="7" r="6.5" fill="#1e3342" /><path d="M4 6h6M4 9h6" stroke="#fff" strokeWidth="1.5" /><path d="M7 13v5" stroke="#8ab" strokeWidth="1.5" /></svg></Ext>
          <Ext><svg width="16" height="17" viewBox="0 0 16 17"><rect width="10" height="14" fill="#4a86e8" /><rect x="8" y="3" width="8" height="14" fill="#e6e6e6" /><path d="M2.5 5h5v3H5" stroke="#fff" fill="none" /><path d="M10 8h4M12 7v6" stroke="#666" /></svg></Ext>
          <Ext><svg width="16" height="16" viewBox="0 0 16 16"><circle cx="8" cy="8" r="7" fill="none" stroke="#16a34a" strokeWidth="2" /><path d="M10 2L5 14" stroke="#16a34a" strokeWidth="2.4" /><circle cx="8" cy="8" r="3" fill="#16a34a" /></svg></Ext>
          <Ext><Puzzle size={16} color="#eee" strokeWidth={2} /></Ext>
        </ExtRow>
        <ToolbarSep />
        <Ext>
          <svg width="20" height="20" viewBox="0 0 20 20">
            <circle cx="10" cy="10" r="10" fill="#efece8" />
            <path d="M5 20c0-4 2-6 5-6s5 2 5 6z" fill="#6a5a4e" />
            <ellipse cx="10" cy="9.5" rx="3.6" ry="4.6" fill="#c4946f" />
            <path d="M6.2 8.5C6 4.5 14 4.5 13.8 8.5 12 7 8 7 6.2 8.5z" fill="#2e2420" />
          </svg>
        </Ext>
        <Ext><EllipsisVertical size={17} strokeWidth={2.4} color="#eee" /></Ext>
      </Toolbar>

      <AppHeader>
        <Logo>
          <LogoWord><b>Ruijie</b><i>|</i>Reyce</LogoWord>
          <RuijieMark />
        </Logo>
        <TopNav>
          <TopNavItem>Home</TopNavItem>
          <TopNavItem $active>Project</TopNavItem>
          <TopNavItem>AI Heatmap</TopNavItem>
          <TopNavItem>Service <ChevronDown size={11} /></TopNavItem>
        </TopNav>
        <HeaderRight>
          <HeaderSearch><Search size={13} />Search</HeaderSearch>
          <HeaderIcon $ml={23}><CirclePlus size={16} strokeWidth={1.5} /></HeaderIcon>
          <HeaderIcon $ml={20}><MessageCircle size={16} strokeWidth={1.5} /><Badge>9</Badge></HeaderIcon>
          <HeaderIcon $ml={24}><Globe size={16} strokeWidth={1.5} /><ChevronDown size={9} /></HeaderIcon>
          <HeaderIcon $ml={27}><TenantLogo>LOGO</TenantLogo><ChevronDown size={9} /></HeaderIcon>
        </HeaderRight>
      </AppHeader>

      <Body>
        <Sidebar>
          <ProjectSelect>
            <Redaction />
            <Dots>..</Dots>
            <SelectChevron><ChevronDown size={16} strokeWidth={1.3} /></SelectChevron>
          </ProjectSelect>
          {nav.map(g => (
            <Group key={g.label}>
              <GroupLabel>{g.label}</GroupLabel>
              {g.items.map(it => (
                <NavRow key={it.t} $active={it.active}>
                  <NavIconBox>{navIcons[it.i]}</NavIconBox>
                  {it.t}
                  {it.beta && <BetaTag>Beta</BetaTag>}
                  {it.more && <NavChevron><ChevronRight size={10} /></NavChevron>}
                </NavRow>
              ))}
            </Group>
          ))}
        </Sidebar>
        <Main>
          <Card>
            <TopologyCanvas />
            <TitleRow>
              <BackButton><ArrowLeft size={15} strokeWidth={1.5} /></BackButton>
              <Title>Actual Topology</Title>
            </TitleRow>
            <SearchRow>
              <DeviceInput>Select a device.</DeviceInput>
              <Hint><Lightbulb size={13} strokeWidth={1.5} />A new device is detected. Click here to add.</Hint>
              <Tools>
                <ToolButton>
                  <S size={14} vb="0 0 14 14"><path d="M1 3h3M6.5 3H13M1 7h7M10.5 7H13M1 11h2M5.5 11H13" strokeWidth="1" /><circle cx="5.2" cy="3" r="1.2" strokeWidth="1" /><circle cx="9.2" cy="7" r="1.2" strokeWidth="1" /><circle cx="4.2" cy="11" r="1.2" strokeWidth="1" /></S>
                  Display Items
                </ToolButton>
                <ToolButton $w={27}><Ellipsis size={15} strokeWidth={2} /></ToolButton>
                <ToolButton $w={26}>
                  <S size={14} vb="0 0 14 14"><path d="M1.5 1.5L5 5M5 2.5V5H2.5M12.5 1.5L9 5M9 2.5V5h2.5M1.5 12.5L5 9M5 11.5V9H2.5M12.5 12.5L9 9M9 11.5V9h2.5" strokeWidth="1.1" /></S>
                </ToolButton>
              </Tools>
            </SearchRow>
            <CollapseButton>
              <S size={16} vb="0 0 16 16"><path d="M6 2C4.5 3 4.5 5 4.5 8s0 5 1.5 6M1 8h6" /><path d="M9 3h1.5M13 3h1M9 8h1.5M13 8h1M9 13h1.5M13 13h1" /></S>
            </CollapseButton>
            <ZoomGroup>
              <ZoomCell $h={29} $line>
                <S size={15} vb="0 0 15 15"><path d="M1 4V1h3M11 1h3v3M14 11v3h-3M4 14H1v-3" /><circle cx="7.5" cy="7.5" r="2.5" /><path d="M7.5 4v1M7.5 10v1M4 7.5h1M10 7.5h1" /></S>
              </ZoomCell>
              <ZoomCell $h={29}><Plus size={15} strokeWidth={1.4} /></ZoomCell>
              <ZoomCell $h={29}><Minus size={15} strokeWidth={1.4} /></ZoomCell>
            </ZoomGroup>
            <Legend>
              <LegendRow><LegendLine $color="#1db58c" />Cable</LegendRow>
              <LegendRow><LegendLine $color="#2a6bff" />Fiber</LegendRow>
              <LegendRow><LegendLine $color="#d9d9d9" />Offline</LegendRow>
              <LegendRow><LegendLine $color="#555" $dash />Wireless</LegendRow>
            </Legend>
            <Stamp>Updated at:  2025/07/18 11:33:13(Finish)</Stamp>
          </Card>
        </Main>
      </Body>

      <FloatPanel>
        <S size={17} vb="0 0 17 17"><path d="M2 16l1-3.2A7.3 7.3 0 1 1 5.5 15z" strokeWidth="1.3" /><path d="M5.5 7.5c.5 3.5 5.5 3.5 6 0" strokeWidth="1.3" /></S>
        <S size={17} vb="0 0 17 17"><path d="M3 5.5c3-2 6-2 7 .5l-1 8c-3 1-6 .5-8-1.5-.5-2.5.5-5 2-7z" strokeWidth="1.3" /><path d="M10 9l5.500-6M4 9.500h3M4 11.500h3" strokeWidth="1.8" /></S>
        <ClipboardList size={17} strokeWidth={1.5} />
      </FloatPanel>
    </Page>
  );
}
